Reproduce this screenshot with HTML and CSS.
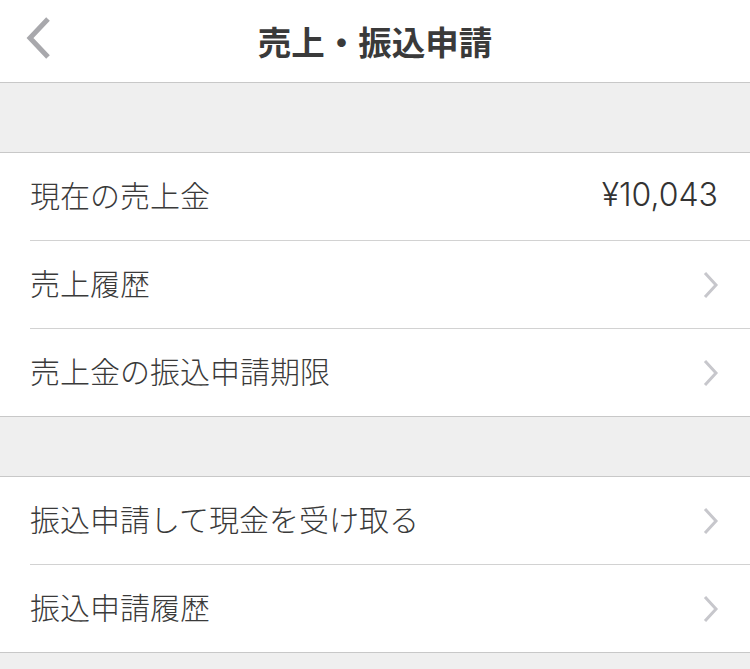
FILE: index.html
```html
<!doctype html>
<html lang="ja">
<head>
<meta charset="utf-8">
<title>売上・振込申請</title>
<link rel="stylesheet" href="styles.css">
</head>
<body>
	<div class="header">
		<a class="back" href="#">
			<svg width="30" height="46" viewBox="0 0 30 46"><path d="M24 4 L6 23 L24 42" fill="none" stroke="#a8a8ac" stroke-width="5"/></svg>
		</a>
		<div class="title">売上・振込申請</div>
	</div>

	<div class="gap gap-top"></div>

	<div class="group">
		<div class="row">
			<div class="row-inner">
				<span class="label">現在の売上金</span>
				<span class="amount">¥10,043</span>
			</div>
		</div>
		<div class="row">
			<div class="row-inner">
				<span class="label">売上履歴</span>
				<svg class="chevron" width="16" height="28" viewBox="0 0 16 28"><path d="M2 2 L13 14 L2 26" fill="none" stroke="#c7c7cc" stroke-width="3"/></svg>
			</div>
		</div>
		<div class="row">
			<div class="row-inner">
				<span class="label">売上金の振込申請期限</span>
				<svg class="chevron" width="16" height="28" viewBox="0 0 16 28"><path d="M2 2 L13 14 L2 26" fill="none" stroke="#c7c7cc" stroke-width="3"/></svg>
			</div>
		</div>
	</div>

	<div class="gap gap-mid"></div>

	<div class="group">
		<div class="row">
			<div class="row-inner">
				<span class="label">振込申請して現金を受け取る</span>
				<svg class="chevron" width="16" height="28" viewBox="0 0 16 28"><path d="M2 2 L13 14 L2 26" fill="none" stroke="#c7c7cc" stroke-width="3"/></svg>
			</div>
		</div>
		<div class="row">
			<div class="row-inner">
				<span class="label">振込申請履歴</span>
				<svg class="chevron" width="16" height="28" viewBox="0 0 16 28"><path d="M2 2 L13 14 L2 26" fill="none" stroke="#c7c7cc" stroke-width="3"/></svg>
			</div>
		</div>
	</div>
</body>
</html>
```

FILE: styles.css
```css
html, body {
    margin: 0;
    padding: 0;
}

body {
    background-color: #efefef;
    font-family: "Noto Sans CJK JP", "Noto Sans", sans-serif;
    color: #3a3a3a;
}

.header {
    display: flex;
    align-items: center;
    justify-content: center;
    height: 82px;
    background-color: #fff;
    border-bottom: 1px solid #c8c8c8;
    position: relative;
}

.back {
    position: absolute;
    left: 24px;
    top: 15px;
    display: block;
}

.back svg {
    display: block;
}

.title {
    font-size: 33.5px;
    font-weight: bold;
    color: #3a3a3a;
    margin-top: -2px;
}

.gap {
    border-bottom: 1px solid #c8c8c8;
}

.gap-top {
    height: 69px;
}

.gap-mid {
    height: 59px;
}

.group {
    background-color: #fff;
    border-bottom: 1px solid #c8c8c8;
}

.row {
    padding-left: 30px;
}

.row-inner {
    display: flex;
    align-items: center;
    justify-content: space-between;
    height: 87px;
    padding-right: 31px;
    border-bottom: 1px solid #d2d2d2;
}

.row:last-child .row-inner {
    border-bottom: none;
}

.label {
    font-size: 30px;
    font-weight: 300;
    margin-bottom: 6px;
}

.amount {
    font-family: Inter, "Liberation Sans", sans-serif;
    font-size: 32px;
    font-weight: 300;
    color: #333;
    margin-right: 1px;
    margin-bottom: 5px;
}

.chevron {
    display: block;
}
```
